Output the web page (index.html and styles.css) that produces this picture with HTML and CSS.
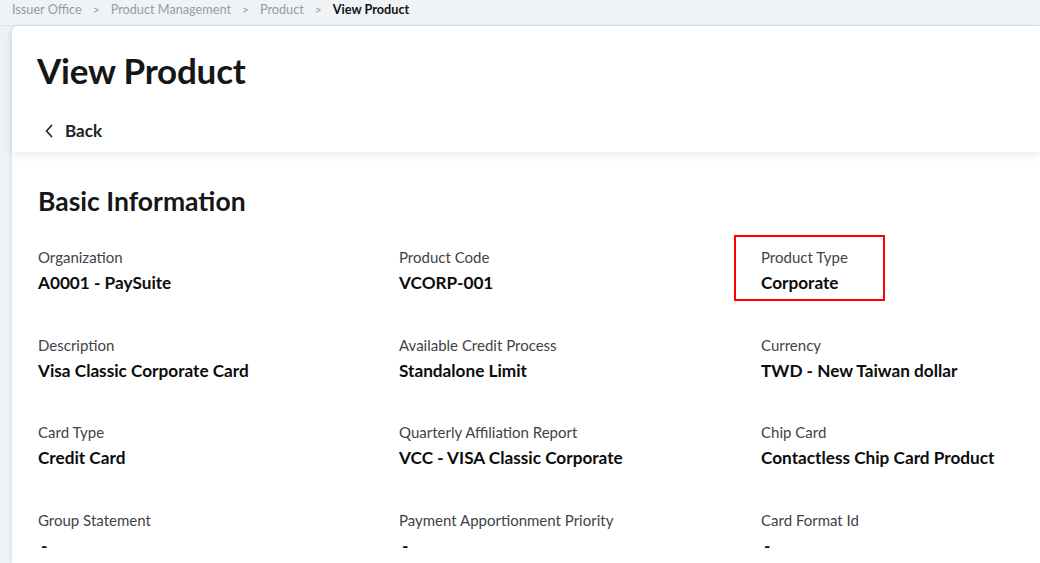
FILE: index.html
```html
<!DOCTYPE html>
<html lang="en">
<head>
<meta charset="utf-8">
<title>View Product</title>
<link rel="stylesheet" href="styles.css">
</head>
<body>
<div class="app">
  <nav class="breadcrumb">
    <span class="crumb">Issuer Office</span>
    <span class="sep">&gt;</span>
    <span class="crumb">Product Management</span>
    <span class="sep">&gt;</span>
    <span class="crumb">Product</span>
    <span class="sep">&gt;</span>
    <span class="crumb current">View Product</span>
  </nav>
  <div class="page">
    <header class="page-header">
      <h1 class="page-title">View Product</h1>
      <a class="back" href="#">
        <svg class="back-icon" width="10" height="14" viewBox="0 0 10 14" aria-hidden="true"><path d="M7.5 1.5 L2.5 7 L7.5 12.5" fill="none" stroke="#1f2937" stroke-width="1.8" stroke-linecap="round" stroke-linejoin="round"/></svg>
        <span>Back</span>
      </a>
    </header>
    <section class="content">
      <h2 class="section-title">Basic Information</h2>
      <div class="grid">
        <div class="field"><div class="label">Organization</div><div class="value">A0001 - PaySuite</div></div>
        <div class="field"><div class="label">Product Code</div><div class="value">VCORP-001</div></div>
        <div class="field highlight"><div class="label">Product Type</div><div class="value">Corporate</div><span class="mark"></span></div>
        <div class="field"><div class="label">Description</div><div class="value">Visa Classic Corporate Card</div></div>
        <div class="field"><div class="label">Available Credit Process</div><div class="value">Standalone Limit</div></div>
        <div class="field"><div class="label">Currency</div><div class="value">TWD - New Taiwan dollar</div></div>
        <div class="field"><div class="label">Card Type</div><div class="value">Credit Card</div></div>
        <div class="field"><div class="label">Quarterly Affiliation Report</div><div class="value">VCC - VISA Classic Corporate</div></div>
        <div class="field"><div class="label">Chip Card</div><div class="value">Contactless Chip Card Product</div></div>
        <div class="field"><div class="label">Group Statement</div><div class="value dash">-</div></div>
        <div class="field"><div class="label">Payment Apportionment Priority</div><div class="value dash">-</div></div>
        <div class="field"><div class="label">Card Format Id</div><div class="value dash">-</div></div>
      </div>
    </section>
  </div>
</div>
</body>
</html>
```
FILE: styles.css
```css
* { box-sizing: border-box; }
html, body { margin: 0; padding: 0; }
body {
  font-family: Lato, "Noto Sans", sans-serif;
  background: #eef2f5;
  color: #1a1a1a;
  width: 1040px;
  height: 563px;
  overflow: hidden;
}
.app { display: flex; flex-direction: column; height: 100%; }
.breadcrumb {
  height: 26px;
  display: flex;
  align-items: center;
  gap: 9px;
  padding: 0 0 7px 12px;
  font-size: 12.7px;
  color: #959ca5;
  background: #eff3f6;
  border-bottom: 1px solid #dce3e9;
}
.sep { padding: 0 2px; color: #959ca5; font-size: 12px; }
.crumb.current { color: #111; font-weight: 700; }
.page {
  flex: 1;
  margin-left: 12px;
  display: flex;
  flex-direction: column;
  background: #fff;
  border-top-left-radius: 7px;
  box-shadow: -2px 0 4px rgba(0,0,0,0.06);
}
.page-header {
  position: relative;
  z-index: 1;
  padding: 23px 25px 0;
  height: 126px;
  background: #fff;
  border-top-left-radius: 7px;
  box-shadow: 0 3px 8px rgba(0,0,0,0.08);
}
.page-title {
  margin: 0;
  font-size: 35px;
  line-height: 42px;
  font-weight: 700;
  color: #161616;
  letter-spacing: -0.2px;
}
.back {
  display: inline-flex;
  align-items: center;
  gap: 11px;
  margin-top: 29px;
  margin-left: 7px;
  color: #222;
  text-decoration: none;
  font-size: 17px;
  font-weight: 700;
}
.back-icon { display: block; }
.content {
  padding: 33px 26px 0;
}
.section-title {
  margin: 0 0 30px;
  font-size: 26.5px;
  line-height: 32px;
  font-weight: 700;
  color: #161616;
}
.grid {
  display: grid;
  grid-template-columns: 361px 362px 1fr;
  row-gap: 41.5px;
}
.field { position: relative; }
.label {
  font-size: 15px;
  line-height: 20px;
  color: #3f4349;
  margin-bottom: 5px;
}
.value {
  font-size: 17.2px;
  line-height: 21px;
  font-weight: 700;
  color: #0c0c0c;
}
.value.dash { padding-left: 3px; }
.mark {
  position: absolute;
  left: -27px;
  top: -12px;
  width: 151px;
  height: 66px;
  border: 2px solid #ff0000;
}
```
